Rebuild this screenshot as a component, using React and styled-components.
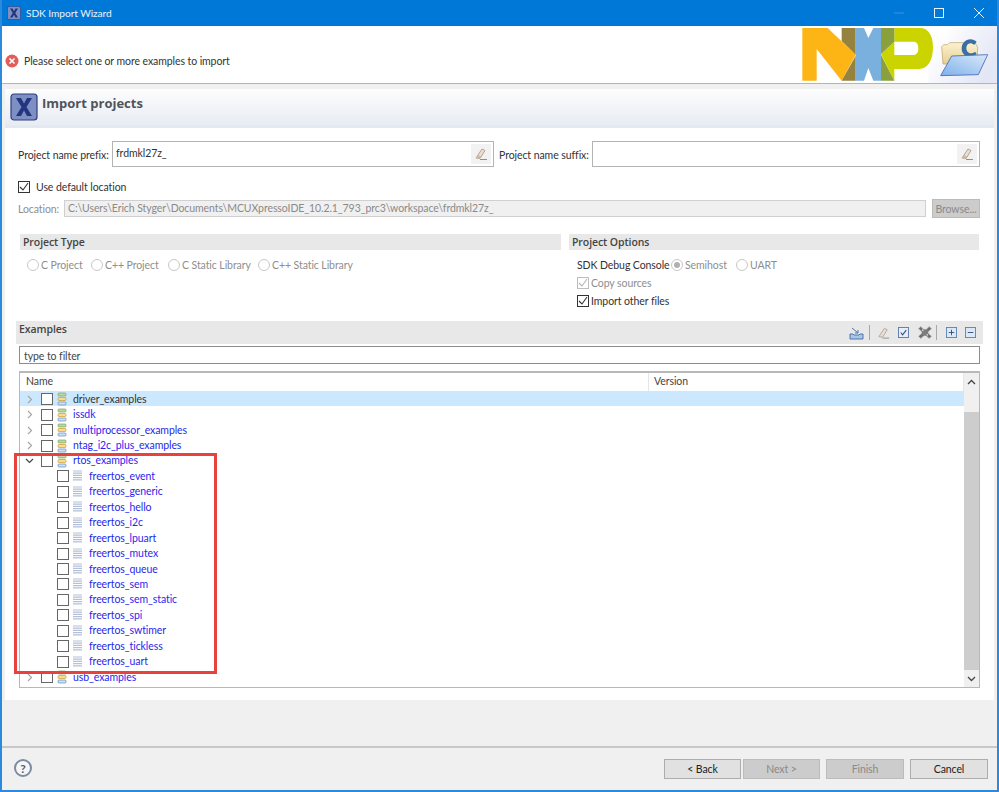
import React from 'react';
import styled, { createGlobalStyle } from 'styled-components';

const Global = createGlobalStyle`
  html, body { margin: 0; padding: 0; background: #f0f0f0; }
  body { font-family: Lato, "Open Sans", sans-serif; font-size: 10.5px; letter-spacing: -0.08px; color: #222; }
  * { box-sizing: border-box; }
`;

const Win = styled.div`
  width: 999px; height: 792px; position: relative; display: flex; flex-direction: column;
  border: solid #2b8ade; border-width: 0 2px 2px 2px; background: #f0f0f0; overflow: hidden;
`;
const TitleBar = styled.div`
  height: 26px; background: #0078d7; color: #fff; margin: 0 -2px; display: flex; align-items: center;
  padding-left: 7px; font-size: 10.2px; flex: none;
`;
const TitleText = styled.span` margin-left: 5px; color: #e8f2fb; `;
const WinButtons = styled.div` margin-left: auto; display: flex; align-items: center; margin-right: 1px; `;
const WinButton = styled.div` width: 39px; height: 26px; display: flex; align-items: center; justify-content: center; margin-right: ${p => p.$mr || 0}px; `;
const Header = styled.div`
  height: 58px; background: #fff; border-bottom: 1px solid #b4b4b4; display: flex; flex: none; position: relative;
  padding-left: 4px; align-items: center; justify-content: space-between;
`;
const Message = styled.div` display: flex; align-items: center; gap: 5px; margin-top: 13px; color: #333; margin-left: -1px; `;
const Logo = styled.svg` margin-right: -2px; align-self: flex-start; flex: none; `;
const Body = styled.div` flex: 1; padding: 5px 3px 0 3px; display: flex; flex-direction: column; min-height: 0; `;
const Panel = styled.div` height: 611px; background: #fff; display: flex; flex-direction: column; flex: none;`;
const Banner = styled.div`
  height: 39px; flex: none; display: flex; align-items: flex-start; padding: 4px 0 0 5px; gap: 4px; line-height: 21px;
  background: linear-gradient(#fdfdfe, #e8ecf3); border-bottom: 3px solid #e3e8f1; letter-spacing: 0;
  font-family: "Open Sans", sans-serif; font-weight: 700; font-size: 13px; color: #50545a;
`;
const Row = styled.div` display: flex; align-items: center; `;
const PrefixRow = styled(Row)` margin: 13px 14px 0 13px; height: 26px; `;
const Label = styled.span`
  color: ${p => p.$off ? '#8e8e8e' : '#333'}; white-space: nowrap; flex: none; padding-top: ${p => p.$pt || 0}px;
  ${p => p.$w ? `width: ${p.$w}px;` : ''} ${p => p.$ml ? `margin-left: ${p.$ml}px;` : ''}
`;
const NameField = styled.div`
  height: 26px; border: 1px solid #b4b4b4; display: flex; justify-content: space-between; align-items: flex-start;
  width: ${p => p.$w}px; padding: 2px 2px 0 3px; color: #333; flex: none; line-height: 18px;
`;
const ClearButton = styled.span` width: 20px; height: 20px; background: #f2f2f2; display: flex; align-items: center; justify-content: center; `;
const CheckRow = styled(Row)` margin: ${p => p.$m || '0'}; gap: ${p => p.$gap ?? 5}px; height: ${p => p.$h || 'auto'}; `;
const Box = styled.span`
  width: 12px; height: 12px; border: 1px solid ${p => p.$off ? '#bdbdbd' : '#333'}; background: #fff; display: inline-flex;
  align-items: center; justify-content: center; flex: none;
`;
const LocationRow = styled(Row)` margin: 5px 14px 0 13px; height: 19px; `;
const LocationField = styled.div`
  width: 862px; height: 17px; background: #f0f0f0; border: 1px solid #d0d0d0; color: #8a8a8a;
  padding-left: 3px; line-height: 15px; flex: none;
`;
const BrowseButton = styled.div`
  margin-left: 6px; width: 48px; height: 19px; background: #ccc; color: #8a8a8a; border: 1px solid #bbb;
  display: flex; align-items: center; justify-content: center; flex: none;
`;
const Columns = styled.div` margin: 16px 14px 0 15px; display: flex; gap: 8px; height: 87px; flex: none; `;
const Group = styled.div` width: ${p => p.$w}px; flex: none; `;
const GroupTitle = styled.div`
  height: 16px; background: #e8e8e8; font-family: "Open Sans", sans-serif; font-size: 10.5px; font-weight: 600; color: #444; padding-left: 3px; line-height: 16px;
`;
const Radios = styled(Row)` margin: 7px 0 0 ${p => p.$ml || 7}px; height: 16px; color: #8e8e8e; `;
const Radio = styled.span`
  width: 12px; height: 12px; border-radius: 50%; border: 1px solid #c8c8c8; background: #fff; flex: none; margin: 0 2px 0 ${p => p.$ml || 0}px;
  display: inline-flex; align-items: center; justify-content: center;
`;
const RadioLabel = styled.span` width: ${p => p.$w}px; flex: none; white-space: nowrap; `;
const RadioDot = styled.span` width: 6px; height: 6px; background: #b0b0b0; border-radius: 50%; `;
const Options = styled.div` display: flex; flex-direction: column; margin-left: 8px; `;
const ExamplesBar = styled.div`
  margin: 0 11px 0 11px; height: 23px; background: #e8e8e8; display: flex; align-items: flex-start; justify-content: space-between;
  font-family: "Open Sans", sans-serif; font-size: 10.5px; font-weight: 600; color: #444; padding: 0 0 0 3px; flex: none; line-height: 16px;
`;
const Tools = styled.div` display: flex; align-items: center; height: 23px; margin-right: 7px; `;
const ToolSep = styled.span` width: 1px; height: 15px; background: #a8a8a8; margin: 0 ${p => p.$r ?? 8}px 0 ${p => p.$l ?? 5}px; `;
const Tool = styled.svg` margin-right: ${p => p.$mr ?? 0}px; flex: none; `;
const Filter = styled.div`
  margin: 2px 14px 0 14px; height: 18px; border: 1px solid #8c8c8c; color: #444; padding-left: 4px; line-height: 18px; flex: none;
`;
const Tree = styled.div`
  margin: 7px 14px 0 14px; height: 317px; border: 1px solid #b8b8b8; border-top-width: 2px; position: relative; display: flex; flex: none; background: #fff;
`;
const TreeMain = styled.div` flex: 1; min-width: 0; display: flex; flex-direction: column; `;
const TreeHead = styled.div` height: 18px; display: flex; flex: none; color: #444; line-height: 17px; `;
const HeadCell = styled.div` width: ${p => p.$w}; padding-left: ${p => p.$pl}px; flex: ${p => p.$w ? 'none' : 1}; border-right: 1px solid #e6e6e6; `;
const TreeRow = styled.div`
  height: 15.44px; display: flex; align-items: center; padding-left: ${p => p.$leaf ? 37 : 5}px; flex: none;
  background: ${p => p.$sel ? '#cce8ff' : 'transparent'}; color: ${p => p.$sel ? '#333' : '#2a1fee'}; white-space: nowrap; line-height: 15px; padding-top: 1px;
`;
const Twist = styled.svg` width: 9px; height: 9px; flex: none; margin-right: 7px; `;
const TreeBox = styled(Box)` width: 12px; height: 12px; border-color: #666; margin-right: 4px; `;
const TreeIcon = styled.svg` flex: none; margin-right: ${p => p.$mr}px; `;
const Scrollbar = styled.div` width: 15px; background: #f0f0f0; flex: none; display: flex; flex-direction: column; align-items: center; `;
const ScrollEnd = styled.div` height: 17px; display: flex; align-items: center; justify-content: center; flex: none; `;
const ScrollGap = styled.div` height: ${p => p.$h}px; flex: none; `;
const Thumb = styled.div` width: 100%; flex: 1; background: #cdcdcd; `;
const Highlight = styled.div`
  position: absolute; left: 12px; top: 453px; width: 203px; height: 221px; border: 3px solid #e8423c; pointer-events: none;
`;
const Footer = styled.div`
  margin: auto -3px 0 -3px; height: 44px; border-top: 2px solid #c8c8c8; display: flex; align-items: flex-start; flex: none;
  padding: 11px 9px 0 12px;
`;
const HelpCircle = styled.span`
  width: 18px; height: 18px; border-radius: 50%; border: 2px solid #7c8ba3; color: #4f5f78; font-weight: 700; font-size: 12px;
  display: flex; align-items: center; justify-content: center; background: #f6f6f6;
`;
const Buttons = styled.div` margin-left: auto; display: flex; `;
const Button = styled.div`
  width: ${p => p.$w}px; height: 20px; margin-left: ${p => p.$ml || 0}px; border: 1px solid ${p => p.$off ? '#bcbcbc' : '#adadad'};
  background: ${p => p.$off ? '#ccc' : '#e1e1e1'}; color: ${p => p.$off ? '#8a8a8a' : '#222'};
  display: flex; align-items: center; justify-content: center;
`;

const Check = ({ c = '#333' }) => (
  <svg width="10" height="10" viewBox="0 0 10 10"><path d="M1 5l3 3 5-7" fill="none" stroke={c} strokeWidth="1.1" /></svg>
);
const Eraser = () => (
  <svg width="14" height="14" viewBox="0 0 14 14">
    <path d="M2 11l6-9 3 1.5-5 8z" fill="#e9dfd4" stroke="#b5a595" />
    <path d="M2 11l2-3 3 1.5-1 2z" fill="#cdb9a8" />
    <path d="M6 12.5h7" stroke="#8f8f8f" />
  </svg>
);
const XLogo = ({ s }) => (
  <svg width={s} height={s} viewBox="0 0 28 28" style={{ flex: 'none' }}>
    <rect x="1" y="1" width="26" height="26" rx="3" fill="#7e8fc4" stroke="#2f3f7e" strokeWidth="1.2" />
    <path d="M6 5h5l3 5.5L17 5h5l-5.5 9L22 23h-5l-3-5.5L11 23H6l5.5-9z" fill="#23357e" />
  </svg>
);
const Stack = ({ mr }) => (
  <TreeIcon $mr={mr} width="10" height="14" viewBox="0 0 10 14">
    <rect x="1" y="1" width="8" height="3" rx="1" fill="#bcd7a4" stroke="#7aa55c" strokeWidth=".7" />
    <rect x="1" y="5.5" width="8" height="3" rx="1" fill="#f6dd93" stroke="#d09a2c" strokeWidth=".7" />
    <rect x="1" y="10" width="8" height="3" rx="1" fill="#cfe0f3" stroke="#5b8ec9" strokeWidth=".7" />
  </TreeIcon>
);
const Doc = () => (
  <TreeIcon $mr={6} width="10" height="12" viewBox="0 0 10 12">
    <path d="M0 1h9M0 3.2h9M0 5.4h9M0 7.6h9M0 9.8h9" stroke="#b4c0d8" strokeWidth="1.2" />
  </TreeIcon>
);

const Chevron = ({ open }) => (
  <Twist viewBox="0 0 9 9">
    {open
      ? <path d="M1 3l3.5 3.5L8 3" fill="none" stroke="#444" strokeWidth="1.2" />
      : <path d="M3 1l3.5 3.5L3 8" fill="none" stroke="#a6a6a6" strokeWidth="1.2" />}
  </Twist>
);

const groups1 = ['issdk', 'multiprocessor_examples', 'ntag_i2c_plus_examples'];
const leaves = ['event', 'generic', 'hello', 'i2c', 'lpuart', 'mutex', 'queue', 'sem', 'sem_static', 'spi', 'swtimer', 'tickless', 'uart'];

const GroupRow = ({ name, sel, open }) => (
  <TreeRow $sel={sel}>
    <Chevron open={open} />
    <TreeBox />
    <Stack mr={6} />
    {name}
  </TreeRow>
);

export default function App() {
  return (
    <Win>
      <Global />
      <TitleBar>
        <XLogo s={14} />
        <TitleText>SDK Import Wizard</TitleText>
        <WinButtons>
          <WinButton $mr={1}><svg width="10" height="10"><path d="M0 5h10" stroke="#3a93e2" /></svg></WinButton>
          <WinButton $mr={1}><svg width="10" height="10"><rect x=".5" y=".5" width="9" height="9" fill="none" stroke="#e8f2fb" /></svg></WinButton>
          <WinButton><svg width="10" height="10"><path d="M0 0l10 10M10 0L0 10" stroke="#e8f2fb" /></svg></WinButton>
        </WinButtons>
      </TitleBar>
      <Header>
        <Message>
          <svg width="14" height="14" viewBox="0 0 14 14"><circle cx="7" cy="7" r="6.5" fill="#e25c5c" /><path d="M4.5 4.5l5 5M9.5 4.5l-5 5" stroke="#fff" strokeWidth="1.6" /></svg>
          Please select one or more examples to import
        </Message>
        <Logo width="204" height="57" viewBox="0 6 612 171">
          <defs>
            <linearGradient id="fade" x1="0" y1="0" x2="1" y2="0.5"><stop offset="0.2" stopColor="#fff" /><stop offset="1" stopColor="#e3e6f5" /></linearGradient>
            <linearGradient id="front" x1="0" y1="1" x2="1" y2="0"><stop offset="0" stopColor="#7fb0ea" /><stop offset="1" stopColor="#d9e9fa" /></linearGradient>
            <linearGradient id="back" x1="0" y1="0" x2="0" y2="1"><stop offset="0" stopColor="#fdf3cf" /><stop offset="1" stopColor="#e6cf94" /></linearGradient>
          </defs>
          <rect x="400" y="6" width="212" height="171" fill="url(#fade)" />
          <polygon points="22,12 98,12 182,92 140,170 65,75 65,170 22,170" fill="#fdb515" />
          <polygon points="140,12 182,12 182,92 140,51" fill="#96823f" />
          <polygon points="182,95 182,170 140,170" fill="#96823f" />
          <polygon points="182,12 207,12 220,42 235,12 258,12 258,170 235,170 220,132 207,170 182,170" fill="#7ab0dd" />
          <path fillRule="evenodd" d="M258 90L298 53V12H375C400 12 414 34 414 70C414 110 398 135 372 135H298V170z M298 53V93H355C366 93 370 85 370 73C370 61 366 53 355 53z" fill="#ccd400" />
          <polygon points="258,12 298,12 298,53 258,90" fill="#89a03c" />
          <polygon points="258,92 298,170 258,170" fill="#89a03c" />
          <path d="M440 68L446 62H458L464 56H540L548 70L546 120H444z" fill="url(#back)" stroke="#b99e64" strokeWidth="2" />
          <path d="M500 74C500 58 512 46 526 46C534 46 540 49 545 54L537 63C534 60 530 58 526 58C518 58 514 65 514 72C514 80 519 88 527 88C532 88 536 86 540 83L545 90C540 95 533 98 525 98C511 98 500 88 500 74z" fill="#3a6ea5" />
          <path d="M437 155L470 96L578 92L550 152z" fill="url(#front)" stroke="#4468b4" strokeWidth="2.5" />
        </Logo>
      </Header>
      <Body>
        <Panel>
          <Banner><XLogo s={28} />Import projects</Banner>
          <PrefixRow>
            <Label $w={94} $pt={1}>Project name prefix:</Label>
            <NameField $w={382}>frdmkl27z_<ClearButton><Eraser /></ClearButton></NameField>
            <Label $w={93} $ml={5} $pt={1}>Project name suffix:</Label>
            <NameField $w={388}><span /><ClearButton><Eraser /></ClearButton></NameField>
          </PrefixRow>
          <CheckRow $m="13px 0 0 13px" $gap={6} $h="14px"><Box><Check /></Box><Label>Use default location</Label></CheckRow>
          <LocationRow>
            <Label $off $w={46}>Location:</Label>
            <LocationField>C:\Users\Erich Styger\Documents\MCUXpressoIDE_10.2.1_793_prc3\workspace\frdmkl27z_</LocationField>
            <BrowseButton>Browse...</BrowseButton>
          </LocationRow>
          <Columns>
            <Group $w={541}>
              <GroupTitle>Project Type</GroupTitle>
              <Radios>
                <Radio /><RadioLabel $w={50}>C Project</RadioLabel>
                <Radio /><RadioLabel $w={63}>C++ Project</RadioLabel>
                <Radio /><RadioLabel $w={76}>C Static Library</RadioLabel>
                <Radio /><RadioLabel $w={90}>C++ Static Library</RadioLabel>
              </Radios>
            </Group>
            <Group $w={410}>
              <GroupTitle>Project Options</GroupTitle>
              <Radios $ml={8}>
                <Label $w={94}>SDK Debug Console</Label>
                <Radio><RadioDot /></Radio><RadioLabel $w={51}>Semihost</RadioLabel>
                <Radio />UART
              </Radios>
              <Options>
                <CheckRow $m="2px 0 0 0" $gap={2} $h="15px"><Box $off><Check c="#b5b5b5" /></Box><Label $off>Copy sources</Label></CheckRow>
                <CheckRow $m="3px 0 0 0" $gap={2} $h="15px"><Box><Check /></Box><Label>Import other files</Label></CheckRow>
              </Options>
            </Group>
          </Columns>
          <ExamplesBar>
            Examples
            <Tools>
              <Tool width="15" height="14" viewBox="0 0 15 14"><path d="M1 8h3l1 1h5l1-1h3v5H1z" fill="#a9c6e6" stroke="#4b76ad" /><path d="M3 2l6 5M9 4v3H6" fill="none" stroke="#4b76ad" /></Tool>
              <ToolSep $r={7} />
              <Tool $mr={8} width="13" height="14" viewBox="0 0 14 14"><path d="M2 11l6-9 3 1.5-5 8z" fill="#e9dfd4" stroke="#b5a595" /><path d="M6 12.5h7" stroke="#8f8f8f" /></Tool>
              <Tool $mr={9} width="11" height="11" viewBox="0 0 12 12"><rect x=".5" y=".5" width="11" height="11" fill="#e6edf7" stroke="#5b7aa9" /><path d="M3 6l2 2.5L9 3.5" fill="none" stroke="#2f4f80" strokeWidth="1.2" /></Tool>
              <Tool width="14" height="15" viewBox="0 0 15 15"><path d="M3 1l4.5 4.5L12 1l2.5 2.5-4.5 4 4.5 4-2.5 2.5-4.5-4-4.5 4L.5 11.5l4.5-4L.5 3.5z" fill="#6f6f6f" stroke="#bdbdbd" strokeWidth=".8" /><circle cx="7.5" cy="7.5" r="3.5" fill="#7d7d7d" /><circle cx="5" cy="5" r="1" fill="#cfcfcf" /><circle cx="10" cy="10" r="1" fill="#cfcfcf" /></Tool>
              <ToolSep $l={4} $r={9} />
              <Tool $mr={8} width="11" height="11" viewBox="0 0 12 12"><rect x=".5" y=".5" width="11" height="11" fill="#dce8f6" stroke="#5b84b8" /><path d="M3 6h6M6 3v6" stroke="#2f4f80" /></Tool>
              <Tool width="11" height="11" viewBox="0 0 12 12"><rect x=".5" y=".5" width="11" height="11" fill="#dce8f6" stroke="#5b84b8" /><path d="M3 6h6" stroke="#2f4f80" /></Tool>
            </Tools>
          </ExamplesBar>
          <Filter>type to filter</Filter>
          <Tree>
            <TreeMain>
              <TreeHead>
                <HeadCell $w="629px" $pl={6}>Name</HeadCell>
                <HeadCell $pl={5}>Version</HeadCell>
              </TreeHead>
              <GroupRow name="driver_examples" sel />
              {groups1.map(n => <GroupRow key={n} name={n} />)}
              <GroupRow name="rtos_examples" open />
              {leaves.map(n => (
                <TreeRow $leaf key={n}><TreeBox /><Doc />freertos_{n}</TreeRow>
              ))}
              <GroupRow name="usb_examples" />
            </TreeMain>
            <Scrollbar>
              <ScrollEnd><svg width="9" height="6"><path d="M1 5l3.5-3.5L8 5" fill="none" stroke="#444" strokeWidth="1.3" /></svg></ScrollEnd>
              <ScrollGap $h={22} />
              <Thumb />
              <ScrollEnd><svg width="9" height="6"><path d="M1 1l3.5 3.5L8 1" fill="none" stroke="#444" strokeWidth="1.3" /></svg></ScrollEnd>
            </Scrollbar>
          </Tree>
        </Panel>
        <Footer>
          <HelpCircle>?</HelpCircle>
          <Buttons>
            <Button $w={77}>&lt; Back</Button>
            <Button $w={77} $off $ml={2}>Next &gt;</Button>
            <Button $w={78} $off $ml={6}>Finish</Button>
            <Button $w={78} $ml={6}>Cancel</Button>
          </Buttons>
        </Footer>
      </Body>
      <Highlight />
    </Win>
  );
}
